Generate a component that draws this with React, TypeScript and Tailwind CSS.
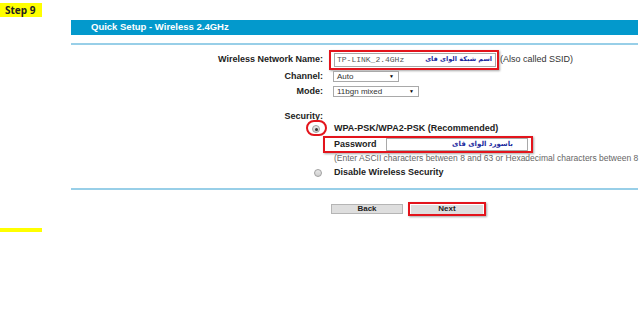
import React from "react";

const red = "border-2 border-[#e3141c] shadow-[1px_1px_2px_rgba(0,0,0,0.35)]";

function Select({ value, width }: { value: string; width: string }) {
  return (
    <div
      className={`${width} h-[11px] border border-[#a9a9a9] bg-white flex items-center justify-between pl-[3px] pr-[4px] text-[8px] text-[#333]`}
    >
      <span>{value}</span>
      <span className="text-[5px] text-black">▼</span>
    </div>
  );
}

function Radio({ checked }: { checked?: boolean }) {
  return (
    <div className="w-[8px] h-[8px] rounded-full border border-[#a0a0a0] bg-gradient-to-b from-[#e8e8e8] to-[#cfcfcf] flex items-center justify-center">
      {checked && <div className="w-[3px] h-[3px] rounded-full bg-[#333]" />}
    </div>
  );
}

export default function App() {
  return (
    <div className="relative w-[640px] h-[322px] bg-white overflow-hidden font-['Liberation_Sans',Arial,sans-serif] text-[9px] text-[#222]">
      <div className="mt-[3px] w-[42px] h-[14px] bg-[#ffff00] flex items-center pl-[5px] text-[10px] font-bold text-[#222] font-['Open_Sans',sans-serif]">
        Step 9
      </div>

      <div className="ml-[71px] w-[567px] mt-[3px]">
        <div className="h-[15px] bg-[#0399cc] flex items-center pl-[20px] text-white font-bold text-[9.5px]">
          Quick Setup - Wireless 2.4GHz
        </div>
        <div className="mt-[8px] h-[2px] bg-[#98cfe8]" />

        <div className="mt-[5px] flex items-center h-[20px]">
          <div className="w-[252px] text-right font-bold">Wireless Network Name:</div>
          <div className={`ml-[6px] w-[170px] h-[20px] ${red} flex items-center pl-[3px] pr-[1px]`}>
            <div className="flex-1 h-[14px] border border-[#a9a9a9] bg-white flex items-center justify-between pl-[2px] pr-[3px]">
              <span className="font-['Liberation_Mono',monospace] text-[8px] text-[#555]">TP-LINK_2.4GHz</span>
              <span dir="rtl" className="font-['DejaVu_Sans',sans-serif] font-bold text-[6.5px] text-[#1c2b9e]">
                اسم شبكة الواى فاى
              </span>
            </div>
          </div>
          <span className="ml-[1px] text-[#333]">(Also called SSID)</span>
        </div>

        <div className="mt-[1px] flex items-center h-[11px]">
          <div className="w-[252px] text-right font-bold">Channel:</div>
          <div className="ml-[10px]">
            <Select value="Auto" width="w-[66px]" />
          </div>
        </div>

        <div className="mt-[4px] flex items-center h-[11px]">
          <div className="w-[252px] text-right font-bold">Mode:</div>
          <div className="ml-[10px]">
            <Select value="11bgn mixed" width="w-[86px]" />
          </div>
        </div>

        <div className="mt-[15px] flex items-center h-[10px]">
          <div className="w-[252px] text-right font-bold">Security:</div>
        </div>

        <div className="relative mt-[2px] flex items-center h-[10px] pl-[241px]">
          <Radio checked />
          <span className="ml-[14px] font-bold">WPA-PSK/WPA2-PSK (Recommended)</span>
          <div className="absolute left-[235px] top-[-4px] w-[21px] h-[16px] rounded-full border-2 border-[#e3141c]" />
        </div>

        <div className={`mt-[2px] ml-[252px] w-[210px] h-[17px] ${red} flex items-center pl-[9px] pr-[3px]`}>
          <span className="w-[52px] font-bold">Password</span>
          <div className="flex-1 h-[13px] border border-[#a9a9a9] bg-white flex items-center justify-end pr-[14px]">
            <span dir="rtl" className="font-['DejaVu_Sans',sans-serif] font-bold text-[7px] text-[#1c2b9e]">
              باسورد الواى فاى
            </span>
          </div>
        </div>

        <div className="mt-[1px] h-[9px] pl-[263px] flex items-center whitespace-nowrap text-[#666] text-[8.5px]">
          (Enter ASCII characters between 8 and 63 or Hexadecimal characters between 8
        </div>

        <div className="mt-[5px] flex items-center h-[10px] pl-[243px]">
          <Radio />
          <span className="ml-[12px] font-bold">Disable Wireless Security</span>
        </div>

        <div className="mt-[10px] h-[2px] bg-[#98cfe8]" />

        <div className="mt-[12px] flex items-center pl-[260px]">
          <div className="w-[72px] h-[10px] bg-[#dedede] border border-[#b5b5b5] flex items-center justify-center font-bold text-[8px]">
            Back
          </div>
          <div className={`ml-[5px] w-[78px] h-[14px] ${red} flex items-center justify-center`}>
            <div className="w-[72px] h-[9px] bg-[#dedede] flex items-center justify-center font-bold text-[8px]">
              Next
            </div>
          </div>
        </div>
      </div>

      <div className="mt-[12px] w-[42px] h-[4px] bg-[#ffff00]" />
    </div>
  );
}
